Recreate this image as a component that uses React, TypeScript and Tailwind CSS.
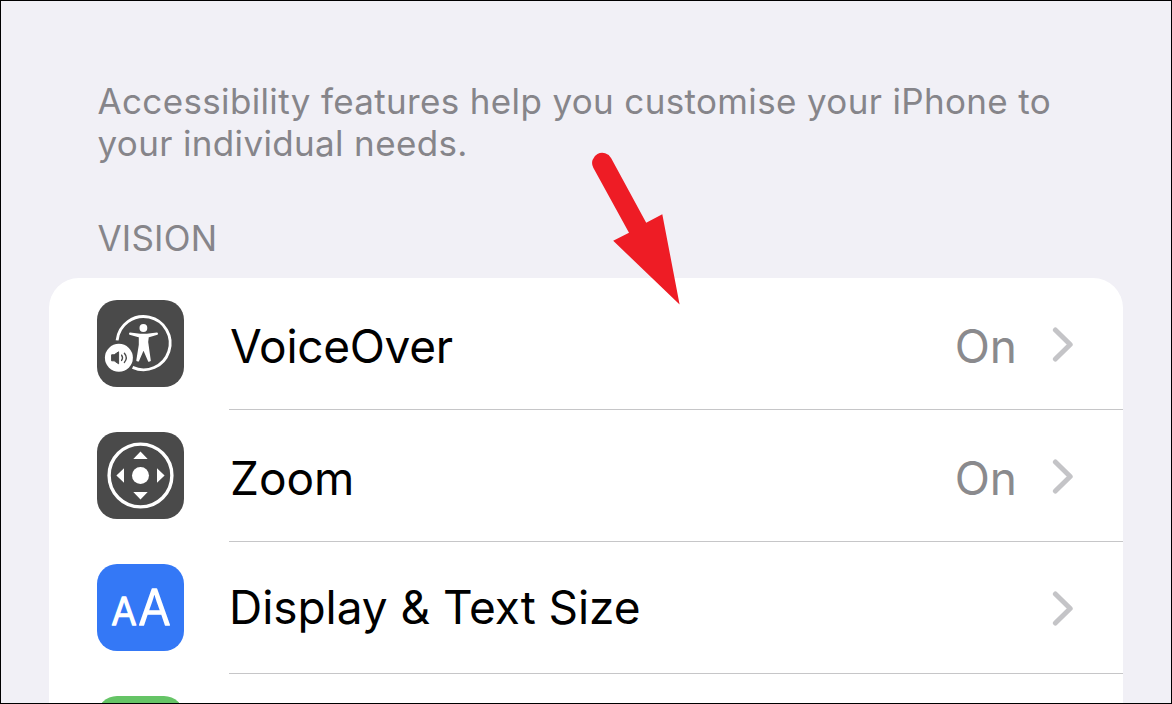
import type { ReactNode } from "react";
import { clsx } from "clsx";

function VoiceOverIcon() {
  return (
    <svg viewBox="0 0 87 87" className="size-full" fill="none">
      <path d="M20.1 40.4A26.6 26.6 0 1 1 35.6 67.4" stroke="#fff" strokeWidth="2.9" />
      <circle cx="46.4" cy="28" r="3.9" fill="#fff" />
      <path
        d="M33 33.2L43 34.6H50L60 33.2L60.2 34L51 36.8L50.4 42L53 60.6L51.8 61L46.8 49.4H46.2L41.3 60.8L40.1 60.4L42.6 45V36.8L32.8 34Z"
        fill="#fff"
        stroke="#fff"
        strokeWidth="1.6"
        strokeLinejoin="round"
      />
      <circle cx="21.9" cy="57.8" r="14" fill="#fff" />
      <path d="M14.6 54.8H17.2L21.6 51.8V63.8L17.2 60.8H14.6Z" fill="#4a4a4a" stroke="#4a4a4a" strokeWidth="1" strokeLinejoin="round" />
      <path d="M24.6 55.2Q26.4 57.8 24.6 60.4M27.4 53.2Q31.2 57.8 27.4 62.4" stroke="#4a4a4a" strokeWidth="1.4" strokeLinecap="round" />
    </svg>
  );
}

function ZoomIcon() {
  return (
    <svg viewBox="0 0 87 87" className="size-full" fill="#fff">
      <circle cx="43.5" cy="43.5" r="31.4" fill="none" stroke="#fff" strokeWidth="3.4" />
      <circle cx="43.5" cy="43.5" r="8.5" />
      <path d="M43.5 19.4L50.7 27H36.3ZM43.5 67.6L50.7 60H36.3ZM19.4 43.5L27 36.3V50.7ZM67.6 43.5L60 36.3V50.7Z" />
    </svg>
  );
}

function TextSizeIcon() {
  return (
    <svg
      viewBox="0 0 87 87"
      className="size-full font-['Inter',sans-serif] font-light"
      fill="#fff"
      stroke="#fff"
      strokeWidth="1.7"
      strokeLinejoin="round"
      textAnchor="middle"
    >
      <text x="26.9" y="61.2" fontSize="37.5" textLength="25" lengthAdjust="spacingAndGlyphs">A</text>
      <text x="57.6" y="61.2" fontSize="49" textLength="32" lengthAdjust="spacingAndGlyphs">A</text>
    </svg>
  );
}

function Chevron() {
  return (
    <svg viewBox="0 0 22 36" className="w-[22px] h-9" fill="none" stroke="#c4c4c7" strokeWidth="5" strokeLinecap="round" strokeLinejoin="round">
      <path d="M3.4 4L18.2 18.5L3.4 33" />
    </svg>
  );
}

const rows: { label: string; value?: string; tile: string; text: string; icon?: ReactNode }[] = [
  { label: "VoiceOver", value: "On", tile: "bg-[#4a4a4a]", text: "pt-[5px] pl-px tracking-[-0.3px]", icon: <VoiceOverIcon /> },
  { label: "Zoom", value: "On", tile: "bg-[#4a4a4a]", text: "pt-[5px] pl-px", icon: <ZoomIcon /> },
  { label: "Display & Text Size", tile: "bg-[#3478f6]", text: "pb-[2px] tracking-[-0.05px]", icon: <TextSizeIcon /> },
  { label: "", tile: "bg-[#65c466]", text: "" },
];

export default function App() {
  return (
    <div className="relative w-[1172px] h-[704px] overflow-hidden border border-black bg-[#f1f0f6] font-['Inter',sans-serif] text-black">
      <header className="pt-[79px] pl-[96.5px] text-[35px] leading-[42px] text-[#86858a]">
        <p className="whitespace-nowrap tracking-[0.35px]">
          Accessibility features help you customise your iPhone to
          <br />
          your individual needs.
        </p>
        <h2 className="mt-[53px] font-normal tracking-[0.2px]">VISION</h2>
      </header>

      <section className="mt-[19px] ml-12 w-[1074px] rounded-t-[30px] bg-white">
        {rows.map((row, i) => (
          <div key={i} className="flex h-[132px] pl-12">
            <div className={clsx("mt-[22px] size-[87px] shrink-0 overflow-hidden rounded-[20px]", row.tile)}>{row.icon}</div>
            <div className="ml-[45px] flex flex-1 items-center border-b border-[#c6c6c8] pr-[49px]">
              <span className={clsx("flex-1 whitespace-nowrap text-[46px] leading-[56px]", row.text)}>{row.label}</span>
              {row.value && <span className="mr-[35px] pt-[5px] text-[46px] leading-[56px] text-[#8a8a8d]">{row.value}</span>}
              <Chevron />
            </div>
          </div>
        ))}
      </section>

      {/* Callout arrow pointing at the first row */}
      <svg viewBox="591 152 90 154" className="absolute left-[590px] top-[151px] w-[90px] h-[154px]" fill="#ee1c25">
        <path d="M593.3 167.8A10 10 0 0 1 611.2 158.2L646.2 222.7L662.3 214.3L679.6 304.4L613.2 240.8L629 232.7Z" />
      </svg>
    </div>
  );
}
